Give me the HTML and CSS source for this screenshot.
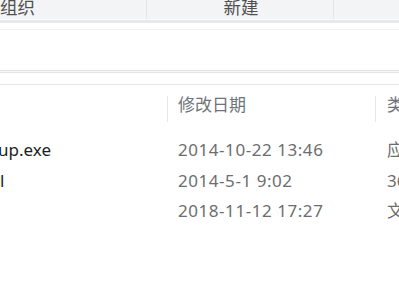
FILE: index.html
```html
<!DOCTYPE html>
<html lang="zh-CN">
<head>
<meta charset="utf-8">
<title>资源管理器</title>
<link rel="stylesheet" href="styles.css">
</head>
<body>
<div class="window">
  <div class="toolbar">
    <div class="group g1"><span class="tool">组织</span></div>
    <div class="group g2"><span class="tool">新建</span></div>
    <div class="group g3"></div>
  </div>
  <div class="ribbon-edge"></div>
  <div class="address"></div>
  <div class="gap"></div>
  <div class="list">
    <div class="header">
      <div class="cell name"><span class="hd">名称</span></div>
      <div class="cell date"><span class="hd">修改日期</span></div>
      <div class="cell type"><span class="hd">类型</span></div>
    </div>
    <div class="rows">
      <div class="row">
        <div class="cell name"><span class="icon"></span><span class="fname">Setup.exe</span></div>
        <div class="cell date">2014-10-22 13:46</div>
        <div class="cell type">应用程序</div>
      </div>
      <div class="row">
        <div class="cell name"><span class="icon"></span><span class="fname">Perl</span></div>
        <div class="cell date">2014-5-1 9:02</div>
        <div class="cell type">360压缩</div>
      </div>
      <div class="row">
        <div class="cell name"><span class="icon"></span><span class="fname">书</span></div>
        <div class="cell date">2018-11-12 17:27</div>
        <div class="cell type">文件夹</div>
      </div>
    </div>
  </div>
</div>
</body>
</html>
```

FILE: styles.css
```css
* { box-sizing: border-box; }
html, body {
  margin: 0;
  padding: 0;
  background: #ffffff;
}
body {
  width: 399px;
  height: 300px;
  overflow: hidden;
  font-family: "Noto Sans", "Noto Sans CJK SC", sans-serif;
}
.window {
  width: 399px;
  height: 300px;
  overflow: hidden;
  background: #ffffff;
}
.toolbar {
  display: flex;
  height: 20px;
  background: #f3f4f5;
  border-bottom: 1px solid #fbfbfb;
}
.group {
  display: flex;
  align-items: flex-end;
  height: 19px;
  padding-bottom: 3px;
  flex: none;
}
.g1 {
  width: 147px;
  border-right: 1px solid #e2e3e5;
}
.g2 {
  width: 187px;
  justify-content: center;
  padding-left: 2px;
  border-right: 1px solid #e2e3e5;
}
.g3 { flex: 1; }
.tool {
  font-size: 17.5px;
  line-height: 17px;
  color: #505050;
  white-space: nowrap;
}
.ribbon-edge {
  height: 3px;
  background: #e8e8e8;
}
.address {
  height: 48px;
  background: linear-gradient(#ffffff 0, #ffffff 6px, #f0f0f0 6px, #f0f0f0 7px, #ffffff 7px);
  border-bottom: 1px solid #e3e3e3;
}
.gap {
  height: 13px;
  background: linear-gradient(#f7f7f7 0, #f7f7f7 1px, #e6e6e6 1px, #e6e6e6 2px, #ffffff 2px);
}
.list {
  margin-left: -55px;
}
.header {
  display: flex;
  height: 38px;
  border-top: 1px solid #e6e6e6;
  padding-top: 11px;
}
.header .cell {
  height: 26px;
  display: flex;
  align-items: flex-start;
}
.hd {
  font-size: 17px;
  line-height: 17px;
  color: #6f747a;
  white-space: nowrap;
}
.header .name,
.header .date {
  border-right: 1px solid #e8e8e8;
}
.cell {
  flex: none;
  white-space: nowrap;
}
.cell.name {
  width: 223px;
  padding-left: 6px;
  display: flex;
  align-items: center;
  gap: 6px;
}
.header .cell.name { gap: 0; align-items: flex-start; }
.cell.date {
  width: 208px;
  padding-left: 10px;
  letter-spacing: 0.55px;
}
.header .cell.date { letter-spacing: 0; }
.cell.type {
  width: 200px;
  padding-left: 11px;
}
.rows {
  padding-top: 13px;
}
.row {
  display: flex;
  height: 30.4px;
  align-items: center;
  font-size: 17px;
  line-height: 30px;
  color: #6d6d6d;
}
.icon {
  width: 16px;
  height: 16px;
  flex: none;
}
.fname {
  color: #1e1e1e;
  white-space: nowrap;
}
```
